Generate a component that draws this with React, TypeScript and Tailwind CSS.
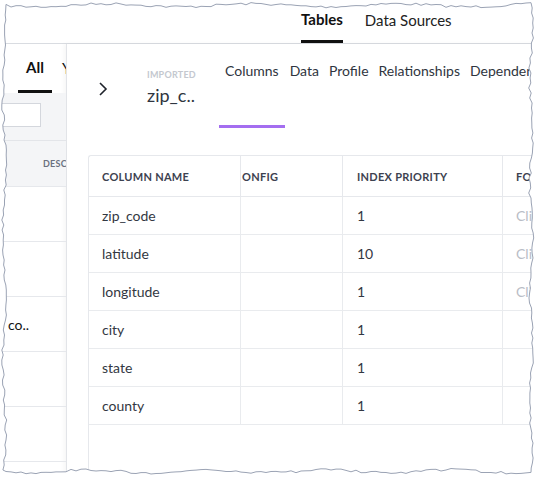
import React from "react";

const ROWS = [
  { name: "zip_code", priority: "1", hint: true },
  { name: "latitude", priority: "10", hint: true },
  { name: "longitude", priority: "1", hint: true },
  { name: "city", priority: "1", hint: false },
  { name: "state", priority: "1", hint: false },
  { name: "county", priority: "1", hint: false },
];

const TABS = ["Columns", "Data", "Profile", "Relationships", "Dependents"];

// deterministic jitter for the torn paper edge
function tornPath() {
  let seed = 7;
  const rnd = () => {
    seed = (seed * 16807) % 2147483647;
    return seed / 2147483647;
  };
  const pts: [number, number][] = [];
  for (let x = 6; x <= 531; x += 5) pts.push([x, 4 + Math.sin(x / 23) * 1.5 + rnd() * 2.5]);
  for (let y = 8; y <= 470; y += 5) pts.push([531 + Math.sin(y / 17) * 1.5 + rnd() * 2.5 - 1, y]);
  for (let x = 531; x >= 6; x -= 5) pts.push([x, 471 + Math.sin(x / 19) * 1.5 + rnd() * 2.5 - 1]);
  for (let y = 470; y >= 8; y -= 5) pts.push([4 + Math.sin(y / 21) * 1.5 + rnd() * 2.5 - 1, y]);
  return "M" + pts.map((p) => `${p[0].toFixed(1)} ${p[1].toFixed(1)}`).join(" L") + " Z";
}

function TornEdge() {
  const d = tornPath();
  return (
    <svg className="absolute inset-0 pointer-events-none" width="539" height="478" viewBox="0 0 539 478">
      <path d={`M0 0 H539 V478 H0 Z ${d}`} fill="#ffffff" fillRule="evenodd" />
      <path d={d} fill="none" stroke="#9ba3b4" strokeWidth="1" />
    </svg>
  );
}

function BackPage() {
  return (
    <div className="relative w-[66px] shrink-0 overflow-hidden">
      <div className="flex h-[49px] items-end pl-[18px] whitespace-nowrap">
        <div className="w-[34px] shrink-0 border-b-[3px] border-[#111] pb-[12px] text-center text-[15px] font-bold text-[#111]">
          All
        </div>
        <div className="ml-[10px] shrink-0 pb-[14px] text-[15px] text-[#111]">Your</div>
      </div>
      <div className="h-[47px] bg-[#f4f5f7] pt-[10px]">
        <div className="ml-[-10px] h-[24px] w-[51px] border border-[#d4d7dd] bg-white" />
      </div>
      <div className="flex h-[46px] items-center border-t border-[#e3e5e9] bg-[#f4f5f7] pl-[43px] text-[9px] font-bold tracking-wide text-[#6b7180] whitespace-nowrap">
        DESCRIPTION
      </div>
      {[0, 1, 2, 3, 4, 5].map((i) => (
        <div key={i} className="flex h-[55px] items-center border-t border-[#e6e8ec] pl-[8px] text-[14px] text-[#111]">
          {i === 2 ? "co.." : ""}
        </div>
      ))}
    </div>
  );
}

export default function App() {
  return (
    <div className="relative h-[478px] w-[539px] overflow-hidden bg-white font-['Lato',sans-serif]">
      <div className="flex h-[44px] items-end border-b border-[#d9dce1] pl-[301px] whitespace-nowrap">
        <div className="border-b-[3px] border-[#111] pb-[10px] text-[15px] font-bold text-[#111]">Tables</div>
        <div className="ml-[22px] pb-[12px] text-[15px] text-[#222]">Data Sources</div>
      </div>

      <div className="flex">
        <BackPage />

        <div className="h-[434px] min-w-0 flex-1 overflow-hidden border-l border-[#e2e4e8] shadow-[-2px_0_4px_rgba(0,0,0,0.04)]">
          <div className="flex h-[111px] whitespace-nowrap">
            <div className="shrink-0 pl-[31px] pt-[37px]">
              <svg width="10" height="16" viewBox="0 0 10 16">
                <path d="M2 2 L8 8 L2 14" fill="none" stroke="#1f232b" strokeWidth="1.6" />
              </svg>
            </div>
            <div className="ml-[39px] w-[72px] shrink-0 pt-[24px]">
              <div className="text-[9px] font-bold tracking-wide text-[#c4c8cf]">IMPORTED</div>
              <div className="mt-[3px] text-[18px] leading-[20px] text-[#2f3540]">zip_c..</div>
            </div>
            <div className="flex shrink-0">
              {TABS.map((t, i) => (
                <div
                  key={t}
                  className={`flex h-[84px] shrink-0 items-start pt-[16px] text-[14px] text-[#2f3540] ${
                    i === 0 ? "border-b-[3px] border-[#a46ef0] px-[6px]" : "px-[5px]"
                  }`}
                >
                  {t}
                </div>
              ))}
            </div>
          </div>

          <div className="ml-[21px] h-[323px] rounded-tl-[3px] border-l border-t border-[#e6e8ec]">
            <div className="flex h-[41px] items-center border-b border-[#e6e8ec] text-[11px] font-bold tracking-wide text-[#3d4250] whitespace-nowrap">
              <div className="w-[152px] shrink-0 border-r border-[#e6e8ec] pl-[13px] leading-[41px]">COLUMN NAME</div>
              <div className="w-[102px] shrink-0 overflow-hidden border-r border-[#e6e8ec] pl-[1px] leading-[41px]">ONFIG</div>
              <div className="w-[160px] shrink-0 border-r border-[#e6e8ec] pl-[14px] leading-[41px]">INDEX PRIORITY</div>
              <div className="shrink-0 pl-[13px] leading-[41px]">FORMAT</div>
            </div>
            {ROWS.map((r) => (
              <div key={r.name} className="flex h-[38px] border-b border-[#e9ebee] text-[14px] text-[#333842] whitespace-nowrap">
                <div className="flex w-[152px] shrink-0 items-center border-r border-[#e9ebee] pl-[13px]">{r.name}</div>
                <div className="w-[102px] shrink-0 border-r border-[#e9ebee]" />
                <div className="flex w-[160px] shrink-0 items-center border-r border-[#e9ebee] pl-[14px]">{r.priority}</div>
                <div className="flex shrink-0 items-center pl-[13px] text-[#b9bdc6]">{r.hint ? "Click to add" : ""}</div>
              </div>
            ))}
          </div>
        </div>
      </div>

      <TornEdge />
    </div>
  );
}
